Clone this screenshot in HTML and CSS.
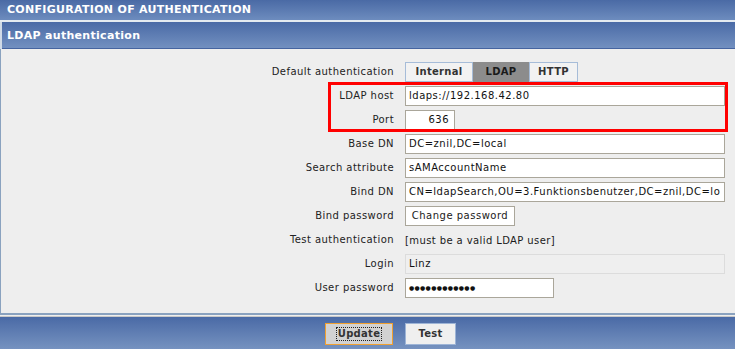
FILE: index.html
```html
<!DOCTYPE html>
<html>
<head>
<meta charset="utf-8">
<link rel="stylesheet" href="styles.css">
</head>
<body>
<div class="page">
  <div class="title-bar">CONFIGURATION OF AUTHENTICATION</div>
  <div class="panel">
    <div class="panel-head">LDAP authentication</div>
    <div class="panel-body">
      <div class="form">
        <div class="label">Default authentication</div>
        <div class="value">
          <div class="tabs">
            <span class="tab">Internal</span><span class="tab tab-active">LDAP</span><span class="tab">HTTP</span>
          </div>
        </div>

        <div class="label">LDAP host</div>
        <div class="value"><div class="input w-full">ldaps://192.168.42.80</div></div>

        <div class="label">Port</div>
        <div class="value"><div class="input w-port">636</div></div>

        <div class="label">Base DN</div>
        <div class="value"><div class="input w-full">DC=znil,DC=local</div></div>

        <div class="label">Search attribute</div>
        <div class="value"><div class="input w-full">sAMAccountName</div></div>

        <div class="label">Bind DN</div>
        <div class="value"><div class="input w-full">CN=ldapSearch,OU=3.Funktionsbenutzer,DC=znil,DC=lo</div></div>

        <div class="label">Bind password</div>
        <div class="value"><div class="btn-plain">Change password</div></div>

        <div class="label">Test authentication</div>
        <div class="value"><span class="note">[must be a valid LDAP user]</span></div>

        <div class="label">Login</div>
        <div class="value"><div class="input w-full input-disabled">Linz</div></div>

        <div class="label">User password</div>
        <div class="value"><div class="input w-pass dots">&#9679;&#9679;&#9679;&#9679;&#9679;&#9679;&#9679;&#9679;&#9679;&#9679;&#9679;&#9679;</div></div>

        <div class="highlight"></div>
      </div>
    </div>
  </div>
  <div class="footer">
    <div class="footer-left"><span class="btn btn-update"><span class="focus">Update</span></span></div>
    <div class="footer-right"><span class="btn btn-test">Test</span></div>
  </div>
</div>
</body>
</html>
```

FILE: styles.css
```css
* { box-sizing: border-box; }
html, body { margin: 0; padding: 0; }
body {
  background: #eeeeee;
  font-family: "DejaVu Sans", Verdana, sans-serif;
  font-size: 10px;
  color: #1a1a1a;
  width: 735px;
  height: 349px;
  overflow: hidden;
}
.page { width: 735px; }

.title-bar {
  height: 22px;
  background: linear-gradient(#4a6aa5, #6d8cbe);
  color: #ffffff;
  font-weight: bold;
  font-size: 11px;
  line-height: 20px;
  padding-left: 7px;
  letter-spacing: 0.3px;
  border-bottom: 2px solid #e4eaf0;
}

.panel {
  border-left: 2px solid #d0dae6;
}
.panel-head {
  height: 27px;
  background: linear-gradient(#4a6aa6, #7290c0);
  border-bottom: 1px solid #4564a0;
  color: #ffffff;
  font-weight: bold;
  font-size: 11px;
  line-height: 28px;
  padding-left: 5px;
  letter-spacing: 0.3px;
}
.panel-body {
  background: #eeeeee;
  border-left: 1px solid #8aa2bf;
  margin-left: -2px;
  border-bottom: 2px solid #8aa2bf;
  padding: 13px 0 15px 0;
}

.form {
  position: relative;
  display: grid;
  grid-template-columns: 393px 320px;
  column-gap: 11px;
  row-gap: 4px;
}
.label {
  text-align: right;
  height: 20px;
  line-height: 20px;
  letter-spacing: 0.45px;
  color: #222;
}
.value {
  height: 20px;
  display: flex;
  align-items: center;
}

.tabs { display: flex; height: 20px; }
.tab {
  display: inline-block;
  height: 20px;
  line-height: 18px;
  border: 1px solid #a6bcd8;
  background: #f2f2f2;
  font-weight: bold;
  color: #333;
  padding: 0 8px;
  letter-spacing: 0.3px;
}
.tab:first-child { width: 68px; text-align: center; }
.tab-active {
  background: #8c8c8c;
  border-color: #8c8c8c;
  width: 56px;
  text-align: center;
  color: #1a1a1a;
}
.tab:last-child { width: 49px; text-align: center; padding: 0; }

.input {
  height: 20px;
  line-height: 18px;
  background: #ffffff;
  border: 1px solid #aaa69a;
  padding: 0 3px;
  white-space: nowrap;
  overflow: hidden;
  color: #111;
  letter-spacing: 0.5px;
}
.w-full { width: 320px; }
.w-port { width: 50px; text-align: right; padding-right: 5px; }
.w-pass { width: 149px; }
.input-disabled {
  background: #efefef;
  border-color: #dcdcdc;
}
.dots { font-size: 6px; letter-spacing: 0.3px; line-height: 18px; }

.btn-plain {
  width: 110px;
  height: 20px;
  line-height: 18px;
  border: 1px solid #aaa69a;
  background: #ffffff;
  text-align: center;
  letter-spacing: 0.5px;
}
.note { letter-spacing: 0.4px; }

.highlight {
  position: absolute;
  left: 327px;
  top: 20px;
  width: 400px;
  height: 50px;
  border: 3px solid #ff0000;
  pointer-events: none;
}

.footer {
  margin-top: 1px;
  border-top: 1px solid #c8c8c8;
  height: 36px;
  background: linear-gradient(#4a6aa6, #7a96c2);
  display: grid;
  grid-template-columns: 393px 1fr;
  column-gap: 12px;
  padding-top: 6px;
}
.footer-left { display: flex; justify-content: flex-end; }
.footer-right { display: flex; }
.btn {
  display: inline-block;
  height: 22px;
  line-height: 20px;
  font-weight: bold;
  color: #333;
  text-align: center;
  letter-spacing: 0.3px;
}
.btn-update {
  width: 68px;
  background: #d2d2d2;
  border: 1px solid #f0a030;
}
.focus {
  display: inline-block;
  line-height: 12px;
  outline: 1px dotted #222;
  padding: 0 1px;
}
.btn-test {
  width: 51px;
  background: #efefef;
  border: 1px solid #9db4d6;
}
```
